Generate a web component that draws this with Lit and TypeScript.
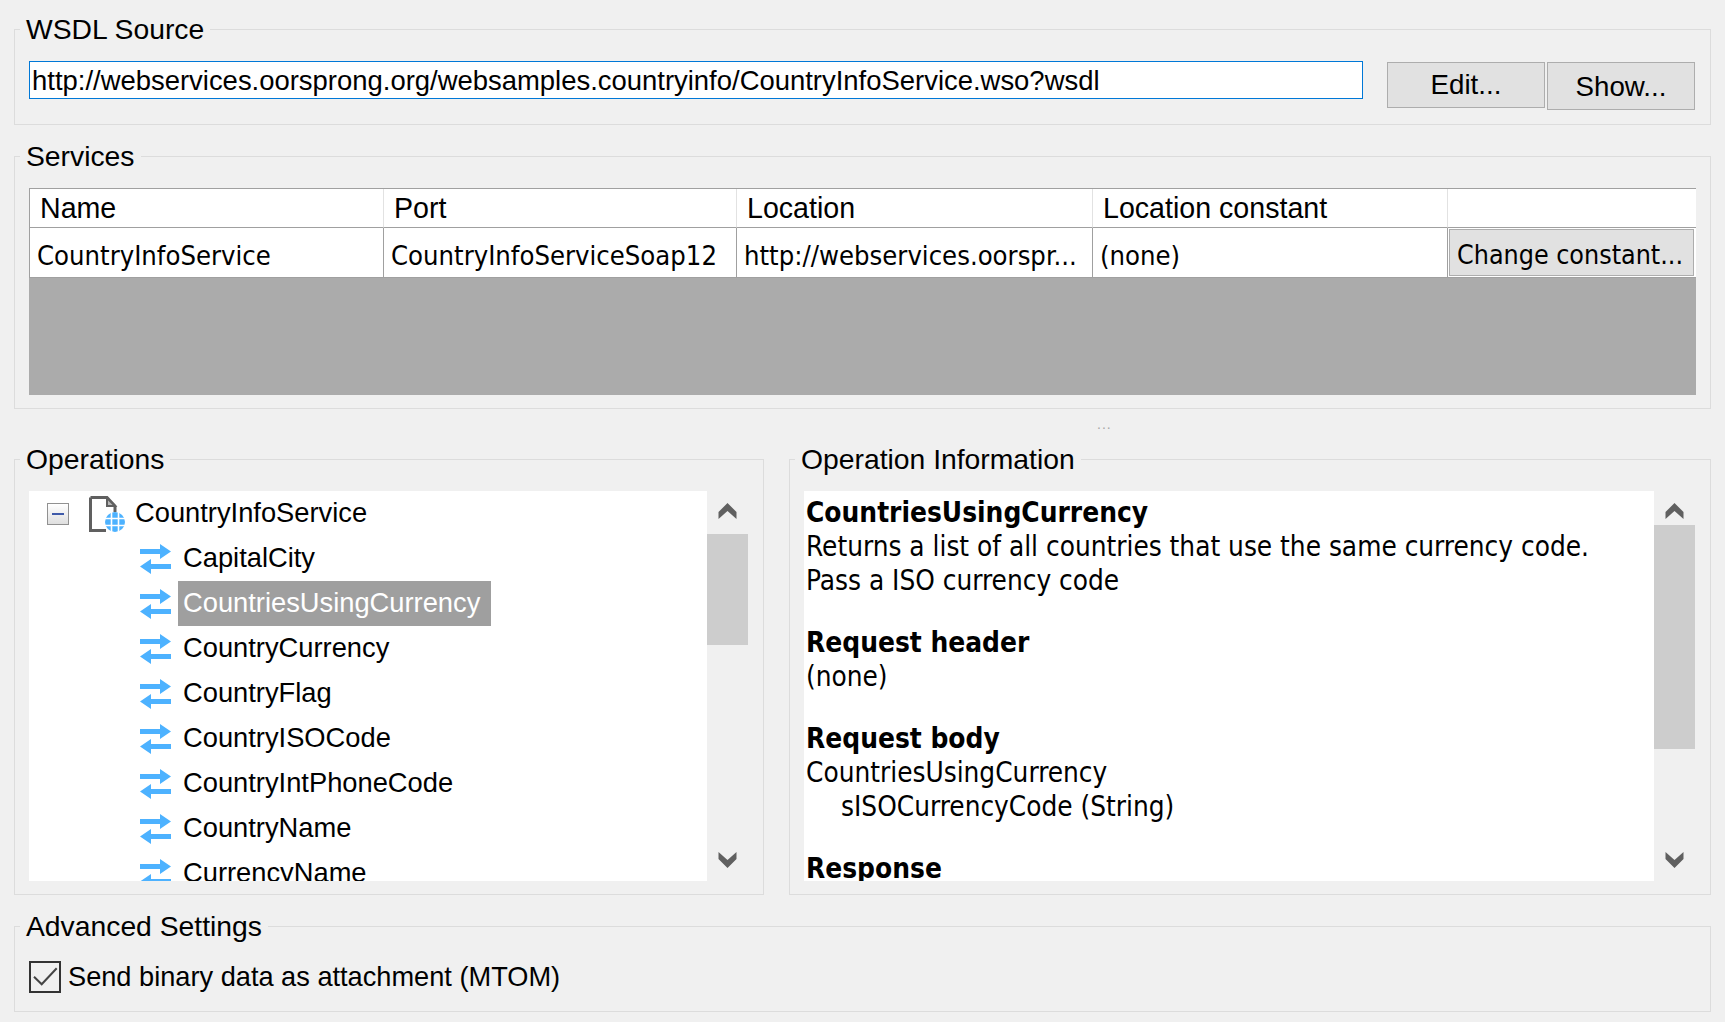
import { LitElement, html, css, svg } from "lit";
import { customElement } from "lit/decorators.js";
import { classMap } from "lit/directives/class-map.js";

const OPERATIONS = [
	"CapitalCity",
	"CountriesUsingCurrency",
	"CountryCurrency",
	"CountryFlag",
	"CountryISOCode",
	"CountryIntPhoneCode",
	"CountryName",
	"CurrencyName",
];

const arrows = svg`<path d="M0 5H20V0L31 7.5L20 15V10H0Z"/><path d="M31 20H11V15L0 22.5L11 30V25H31Z"/>`;

@customElement("app-root")
export class AppRoot extends LitElement {
	static override styles = css`
		:host {
			background: #f0f0f0;
			box-sizing: border-box;
			color: #000;
			display: flex;
			flex-direction: column;
			font-family: "Liberation Sans", Arial, sans-serif;
			font-size: 27.3px;
			height: 1022px;
			padding: 29px 14px 0;
			width: 1725px;
		}

		.group {
			border: 1px solid #dcdcdc;
			box-sizing: border-box;
			display: flex;
			flex-direction: column;
			min-width: 0;
		}

		.legend {
			background: #f0f0f0;
			flex: none;
			font-size: 28.3px;
			height: 32px;
			line-height: 32px;
			margin: -17px 0 16px 5px;
			padding: 0 6px;
			white-space: nowrap;
			width: fit-content;
		}

		/* wsdl source */
		.wsdl { flex: none; height: 96px; }

		.wsdl-row {
			display: flex;
			padding: 0 15px 0 14px;
		}

		.url {
			background: #fff;
			border: 1px solid #0078d7;
			box-sizing: border-box;
			font-size: 27.45px;
			height: 38px;
			line-height: 37px;
			padding-left: 2px;
			white-space: nowrap;
			width: 1334px;
		}

		.btn {
			background: #e1e1e1;
			border: 1px solid #adadad;
			box-sizing: border-box;
			text-align: center;
		}

		.edit, .show { font-size: 27.7px; margin-top: 1px; }
		.edit { height: 46px; line-height: 44px; margin-left: 24px; width: 158px; }
		.show { height: 48px; line-height: 48px; margin-left: 2px; width: 148px; }

		/* services */
		.services { flex: none; height: 253px; margin-top: 31px; }

		.table-wrap {
			display: flex;
			flex: 1;
			flex-direction: column;
			margin: 0 14px 13px 14px;
			min-height: 0;
		}

		.table {
			background: #fff;
			border-left: 1px solid #a0a0a0;
			border-top: 1px solid #a0a0a0;
			display: grid;
			flex: none;
			grid-template-columns: 354px 353px 356px 355px 1fr;
			grid-template-rows: 39px 50px;
		}

		.th {
			border-bottom: 1px solid #a0a0a0;
			border-right: 1px solid #e2e2e2;
			font-size: 28.6px;
			line-height: 39px;
			padding-left: 10px;
			white-space: nowrap;
		}

		.th:nth-child(5) { border-right: 0; }

		.td {
			border-bottom: 1px solid #a0a0a0;
			border-right: 1px solid #a0a0a0;
			font-family: "DejaVu Sans", sans-serif;
			font-size: 27.2px;
			font-stretch: condensed;
			line-height: 50px;
			overflow: hidden;
			padding: 3px 0 0 7px;
			white-space: nowrap;
		}

		.td.last {
			border-right: 0;
			padding: 1px 2px 1px 1px;
		}

		.change {
			font-size: 26.6px;
			height: 47px;
			line-height: 42px;
			padding: 4px 0 0 7px;
			text-align: left;
		}

		.empty { background: #ababab; flex: 1; }

		.splitter {
			box-sizing: border-box;
			color: #a8a8a8;
			flex: none;
			font-size: 14px;
			height: 50px;
			letter-spacing: 1px;
			line-height: 30px;
			padding-left: 1083px;
		}

		/* operations */
		.panes {
			display: flex;
			flex: none;
			gap: 25px;
			height: 436px;
		}

		.ops { width: 750px; }
		.info { width: 922px; }

		.pane-body {
			display: flex;
			flex: 1;
			margin: 0 0 13px 14px;
			min-height: 0;
		}

		.tree {
			background: #fff;
			flex: none;
			overflow: hidden;
			width: 678px;
		}

		.root, .op {
			align-items: center;
			display: flex;
			height: 45px;
			white-space: nowrap;
		}

		.expander {
			align-items: center;
			background: linear-gradient(#fff, #dfdfdf);
			border: 1px solid #919191;
			box-sizing: border-box;
			display: flex;
			flex: none;
			height: 22px;
			justify-content: center;
			margin-left: 18px;
			width: 22px;
		}

		.expander::before {
			background: #3f5aa9;
			content: "";
			height: 2px;
			width: 12px;
		}

		.doc { flex: none; height: 36px; margin-left: 20px; width: 36px; }
		.root span { margin-left: 10px; padding-bottom: 2px; }

		.op { padding-left: 111px; }
		.arrows { fill: #4db2ff; flex: none; height: 30px; width: 31px; }

		.label {
			line-height: 43px;
			margin-left: 7px;
			padding: 0 11px 2px 5px;
		}

		.label.selected { background: #9f9f9f; color: #fff; }

		.scrollbar {
			align-items: center;
			display: flex;
			flex: none;
			flex-direction: column;
			width: 41px;
		}

		.chev { fill: #606060; flex: none; height: 16px; width: 19px; }
		.chev.up { margin-top: 12px; }
		.chev.down { margin-bottom: 13px; margin-top: auto; }
		.thumb { background: #cdcdcd; flex: none; width: 100%; }

		.doc-text {
			background: #fff;
			box-sizing: border-box;
			flex: none;
			font-family: "DejaVu Sans", sans-serif;
			font-size: 27.7px;
			font-stretch: condensed;
			line-height: 34px;
			overflow: hidden;
			padding: 5px 0 0 2px;
			white-space: nowrap;
			width: 850px;
		}

		.doc-text p { margin: 0 0 28px; }
		.doc-text b { display: block; font-size: 27.8px; }
		.indent { padding-left: 35px; }

		/* advanced */
		.advanced { flex: none; height: 86px; margin-top: 31px; }

		.check-row {
			align-items: center;
			display: flex;
			font-size: 27.2px;
			gap: 7px;
			margin: 3px 0 0 14px;
		}

		.box {
			border: 2px solid #333;
			box-sizing: border-box;
			flex: none;
			height: 32px;
			width: 32px;
		}

		.box svg {
			display: block;
			fill: none;
			height: 28px;
			stroke: #444;
			stroke-width: 2;
			width: 28px;
		}
	`;

	private scrollbar(thumbOffset: number, thumbHeight: number) {
		return html`
			<div class="scrollbar">
				<svg class="chev up" viewBox="0 0 18 16"><path d="M9 0L18 9V16L9 8L0 16V9Z"/></svg>
				<div class="thumb" style="margin-top:${thumbOffset}px;height:${thumbHeight}px"></div>
				<svg class="chev down" viewBox="0 0 18 16"><path d="M9 16L18 7V0L9 8L0 0V7Z"/></svg>
			</div>
		`;
	}

	override render() {
		return html`
			<section class="group wsdl">
				<div class="legend">WSDL Source</div>
				<div class="wsdl-row">
					<div class="url">http://webservices.oorsprong.org/websamples.countryinfo/CountryInfoService.wso?wsdl</div>
					<div class="btn edit">Edit...</div>
					<div class="btn show">Show...</div>
				</div>
			</section>

			<section class="group services">
				<div class="legend">Services</div>
				<div class="table-wrap">
					<div class="table">
						<div class="th">Name</div>
						<div class="th">Port</div>
						<div class="th">Location</div>
						<div class="th">Location constant</div>
						<div class="th"></div>
						<div class="td">CountryInfoService</div>
						<div class="td">CountryInfoServiceSoap12</div>
						<div class="td">http://webservices.oorspr...</div>
						<div class="td">(none)</div>
						<div class="td last"><div class="btn change">Change constant...</div></div>
					</div>
					<div class="empty"></div>
				</div>
			</section>

			<div class="splitter">...</div>

			<div class="panes">
				<section class="group ops">
					<div class="legend">Operations</div>
					<div class="pane-body">
						<div class="tree">
							<div class="root">
								<div class="expander"></div>
								<svg class="doc" viewBox="0 0 36 36">
									<path d="M1.5 1.5H18L26 10V16M17 34.5H1.5V1.5" fill="none" stroke="#606060" stroke-width="3"/>
									<path d="M18 2V10H26Z" fill="#b8b8b8" stroke="#606060" stroke-width="2"/>
									<circle cx="26" cy="26" r="10" fill="#4db2ff"/>
									<path d="M16 22.500H36M16 29.500H36M22.500 16V36M29.500 16V36" stroke="#fff" stroke-width="1.6"/>
								</svg>
								<span>CountryInfoService</span>
							</div>
							${OPERATIONS.map(
								(name, i) => html`
									<div class="op">
										<svg class="arrows" viewBox="0 0 31 30">${arrows}</svg>
										<div class="${classMap({ label: true, selected: i === 1 })}">${name}</div>
									</div>
								`
							)}
						</div>
						${this.scrollbar(15, 111)}
					</div>
				</section>

				<section class="group info">
					<div class="legend">Operation Information</div>
					<div class="pane-body">
						<div class="doc-text">
							<p>
								<b>CountriesUsingCurrency</b>
								Returns a list of all countries that use the same currency code.<br />
								Pass a ISO currency code
							</p>
							<p>
								<b>Request header</b>
								(none)
							</p>
							<p>
								<b>Request body</b>
								CountriesUsingCurrency<br />
								<span class="indent">sISOCurrencyCode (String)</span>
							</p>
							<p><b>Response</b></p>
						</div>
						${this.scrollbar(6, 224)}
					</div>
				</section>
			</div>

			<section class="group advanced">
				<div class="legend">Advanced Settings</div>
				<div class="check-row">
					<div class="box">
						<svg viewBox="0 0 28 28"><path d="M3 13.700L10.700 21.300L25.700 5.300"/></svg>
					</div>
					<span>Send binary data as attachment (MTOM)</span>
				</div>
			</section>
		`;
	}
}
